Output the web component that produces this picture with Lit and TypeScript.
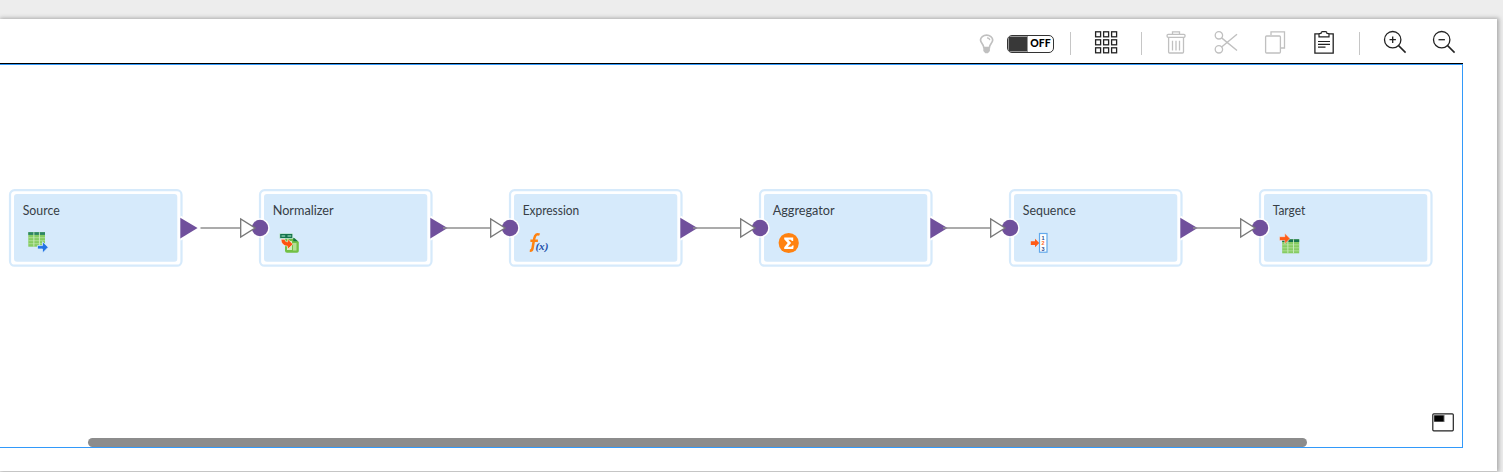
import { LitElement, html, css, svg } from "lit";
import { customElement } from "lit/decorators.js";
import { styleMap } from "lit/directives/style-map.js";

interface FlowNode { label: string; x: number; width: number; icon: unknown }

const sheet = (x: number, y: number, w: number, h: number, head: string) => svg`
  <rect x=${x} y=${y} width=${w} height=${h} fill="#86cc62"/>
  <rect x=${x} y=${y} width=${w} height="2.700" fill=${head}/>
  <path d="M${x} ${y + 5.5}h${w}M${x} ${y + 8.5}h${w}M${x} ${y + 11.5}h${w}" stroke="#b5e29d" stroke-width=".8"/>
  <path d="M${x + w / 3} ${y}v${h}M${x + (2 * w) / 3} ${y}v${h}" stroke="#cdebc3" stroke-width=".9"/>`;

/* Node icons use the coordinates of the 174 x 78 node frame. */
const sourceIcon = svg`
  ${sheet(19.3, 43.2, 16.7, 14.5, "#2c8465")}
  <path d="M28.500 56.600h5v-3.900l5.700 5.600-5.700 5.700v-4h-5z" fill="#2273e3" stroke="#d6eafb" stroke-width=".8"/>`;
const normalizerIcon = svg`
  <path d="M26 49h9.500l4.300 4v9q0 1.800-1.800 1.800h-10q-2 0-2-2z" fill="#72c044"/>
  <path d="M29.500 52h3.500v9h-5v-3h1.500z" fill="#d2edbd"/><path d="M34 54h3.500v7.500h-3.500z" fill="#b4df95"/>
  <path d="M34.300 48.500v3.800h4.500z" fill="#14734c"/>
  <rect x="20.800" y="44.600" width="13" height="4.800" fill="#14734c" stroke="#d5f2e2" stroke-width=".7"/>
  <path d="M22.500 47h3.700M28.500 47h3.700" stroke="#80c7a5" stroke-width="1.300"/>
  <path d="M22 50.300h4q-.2 2.600 2.600 2.700v-3l5.400 5.200-5.400 5.100v-3.100q-6.400-.4-6.600-6.900z" fill="#ff5210" stroke="#fff" stroke-width=".5"/>`;
const expressionIcon = svg`
  <path d="M30.600 45.700q-2.900-1.300-4.400 1.100-.9 1.800-1.600 6.200l-1 6q-.5 3-2.800 2.800M21.400 51.700h7.500" fill="none" stroke="#ff8210" stroke-width="2.500"/>
  <text class="fx" x="26.400" y="60.800" textLength="13" lengthAdjust="spacingAndGlyphs">(x)</text>`;
const aggregatorIcon = svg`
  <circle cx="29.700" cy="54" r="10.100" fill="#ff8210"/>
  <path d="M25.200 48.400h9v3.500h-1.400l-.8-1.100h-2.700l2.800 3.200-3.300 3.700h3.500l1-1.300h1.400l-.5 3.500h-9v-1.700l3.500-4.100-3.500-3.900z" fill="#fff"/>`;
const sequenceIcon = svg`
  <path d="M21.800 52.200h4.200v-2.400l4.300 4.200-4.300 4.300v-2.400h-4.200z" fill="#ff5b17"/>
  <rect x="30.500" y="44.500" width="7.500" height="18.700" fill="#fff" stroke="#62a9ec" stroke-width="1.200"/>
  <text class="digit" x="32.600" y="50.500">1</text>
  <text class="digit two" x="32.600" y="56.300">2</text>
  <text class="digit" x="32.600" y="62.200">3</text>`;
const targetIcon = svg`
  ${sheet(23.2, 50.3, 17, 14, "#17744e")}
  <path d="M20.500 47.700h5.300v-3.500l5.200 5.400-5.200 5.300v-3.400h-5.300z" fill="#ff5c18" stroke="#e8f1f7" stroke-width=".5"/>`;

const nodes: FlowNode[] = [
  { label: "Source", x: 9, width: 37, icon: sourceIcon },
  { label: "Normalizer", x: 259, width: 61, icon: normalizerIcon },
  { label: "Expression", x: 509, width: 56.5, icon: expressionIcon },
  { label: "Aggregator", x: 759, width: 62, icon: aggregatorIcon },
  { label: "Sequence", x: 1009, width: 53, icon: sequenceIcon },
  { label: "Target", x: 1259, width: 32.5, icon: targetIcon },
];

@customElement("flow-node")
class FlowNodeElement extends LitElement {
  static properties = { node: { attribute: false } };
  declare node: FlowNode;
  static styles = css`
    :host { display: block; }
    svg { display: block; overflow: visible; }
    .label { font: 12.5px "Lato", sans-serif; fill: #363e46; }
    .fx { font: italic bold 10.5px "Liberation Serif", serif; fill: #1c4fa8; }
    .digit { font: bold 5.5px "Liberation Sans", sans-serif; fill: #284b91; }
    .two { fill: #ff6a2a; }
  `;
  render() {
    const n = this.node;
    return html`<svg width="174" height="78" viewBox="0 0 174 78">
      <rect x="1" y="1.200" width="171.500" height="75.500" rx="4.500" fill="#fff" stroke="#d6eafb" stroke-width="2.200"/>
      <rect x="5" y="5" width="163.300" height="67.700" rx="3" fill="#d6eafb"/>
      <text class="label" x="13.700" y="25.500" textLength=${n.width} lengthAdjust="spacingAndGlyphs">${n.label}</text>
      ${n.icon}
    </svg>`;
  }
}

@customElement("app-root")
class AppRoot extends LitElement {
  static styles = css`
    :host { display: block; height: 472px; overflow: hidden; background: #ededed; font-family: "Lato", sans-serif; }
    .page { box-sizing: border-box; height: 472px; padding: 19px 6px 1px 0; }
    .panel { box-sizing: border-box; height: 452px; padding-right: 34px; background: #fff; box-shadow: 1px 0 4px 1px #aaa; }
    .toolbar { box-sizing: border-box; height: 45px; display: flex; justify-content: flex-end; align-items: flex-start; padding: 11px 7px 0 0; border-bottom: 1px solid #000; }
    .toolbar svg { display: block; width: 24px; height: 24px; flex: none; fill: none; stroke: #222; stroke-width: 1.3; }
    .toolbar .muted { stroke: #c0c0c0; }
    .sep { width: 1px; height: 23px; margin: 2px 23px 0; background: #c6c6c6; }
    .sep.first { margin-left: 16px; }
    .sep.second { margin-right: 22px; }
    .toggle { box-sizing: border-box; width: 47px; height: 18px; margin: 5px 0 0 8px; border: 1px solid #333; border-radius: 5px; display: flex; overflow: hidden; background: #fff; }
    .knob { width: 20px; background: #383838; box-shadow: inset 0 0 0 1px #999; }
    .off { flex: 1; text-align: center; font: 900 10.5px/15px "Lato", sans-serif; color: #000; }
    .g25 { margin-left: 25px; }
    .g26 { margin-left: 26px; }
    .canvas { box-sizing: border-box; position: relative; height: 384px; border: 1px solid #3299fa; border-left: 0; overflow: hidden; background: #fff; }
    .wires { position: absolute; left: 0; top: 0; display: block; }
    .node { position: absolute; top: 124px; }
    .map { position: absolute; left: 1432px; top: 348px; }
    .scroll { position: absolute; left: 88px; top: 373px; width: 1219px; height: 9px; border-radius: 4.5px; background: #8c8c8c; }
  `;

  toolbar() {
    const lens = svg`<circle cx="9.700" cy="9.700" r="8.200"/><path d="m15.600 15.600 7 7" stroke-width="1.500"/>`;
    return html`<div class="toolbar">
      <svg class="muted" viewBox="0 0 24 24"><path d="M8.800 17.500c0-3.500-3.300-4.500-3.300-7.400a6.100 5 0 0 1 12.200 0c0 2.900-3.300 3.900-3.300 7.400z" stroke-width="1.700"/><path d="M12 7.800q2.500.2 2.800 2.300"/><path d="M8.300 17h6.600v4l-2 2.200h-2.600l-2-2.200z" fill="#c0c0c0" stroke="none"/></svg>
      <div class="toggle"><div class="knob"></div><div class="off">OFF</div></div>
      <div class="sep first"></div>
      <svg viewBox="0 0 24 24">${[0, 1, 2].map((r) => [0, 1, 2].map((c) => svg`<rect x=${1.6 + c * 8} y=${1.8 + r * 8} width="5" height="5"/>`))}</svg>
      <div class="sep second"></div>
      <svg class="muted" viewBox="0 0 24 24"><rect x="3.100" y="4.300" width="17.900" height="3" rx="1"/><path d="M8.500 4.300V1.900h7v2.400M4.600 7.300V22q0 1 1 1h12.900q1 0 1-1V7.300M8.500 10.800v9.700M12 10.800v9.700M15.500 10.800v9.700"/></svg>
      <svg class="muted g26" viewBox="0 0 24 24"><circle cx="4.900" cy="5.300" r="3.700"/><circle cx="4.900" cy="19.300" r="3.700"/><path d="M7.600 7.900 23 20.500M7.600 17 23 4.300" stroke-width="1.400"/></svg>
      <svg class="muted g25" viewBox="0 0 24 24"><path d="M8 5V1.800h13.500V18H18"/><rect x="2.600" y="6" width="14.800" height="17" rx="1"/></svg>
      <svg class="g25" viewBox="0 0 24 24"><path d="M7 3.800H2.900v19.300h18.300V3.800H17"/><path d="M7 6.900V4.200q0-.8 2-.8 0-1.700 1.600-1.700h2.800q1.600 0 1.600 1.700 2 0 2 .8v2.700zM6 11.500h12M6 14.300h12M6 17.100h7.500" stroke-width="1.200"/></svg>
      <div class="sep"></div>
      <svg viewBox="0 0 24 24">${lens}<path d="M6.500 9.700h6.400M9.700 6.500v6.400"/></svg>
      <svg class="g25" viewBox="0 0 24 24">${lens}<path d="M6.500 9.700h6.400"/></svg>
    </div>`;
  }

  render() {
    return html`<div class="page"><div class="panel">
      ${this.toolbar()}
      <div class="canvas">
        ${nodes.map((n) => html`<flow-node class="node" style=${styleMap({ left: `${n.x}px` })} .node=${n}></flow-node>`)}
        <svg class="wires" width="1462" height="382">
          ${nodes.slice(0, -1).map(({ x }, i) => svg`
            <path d="M${x + 171.5} 150.500v25.200l3.500-2v-21.200z" fill="#fff"/>
            <path d="M${x + 171.3} 152.800v20.600l17.300-10.300z" fill="#70509c"/>
            <circle cx=${x + 251} cy="163" r="9.700" fill="#fff"/>
            <circle cx=${x + 251} cy="163" r="8.200" fill="#70509c"/>
            <path d="M${x + (i ? 184 : 191.5)} 163h${i ? 47 : 39.5}" stroke="#8f8f8f" stroke-width="1.700"/>
            <path d="M${x + 231.700} 154v18l14.300-9z" fill="#fff" stroke="#777" stroke-width="1.300"/>`)}
        </svg>
        <svg class="map" width="22" height="19"><rect x=".8" y=".8" width="20.500" height="17" rx="1" fill="#fff" stroke="#222" stroke-width="1.200"/><rect x="2" y="2" width="10.700" height="7" fill="#999"/><rect x="2.300" y="2.500" width="9.400" height="6" fill="#000"/></svg>
        <div class="scroll"></div>
      </div>
    </div></div>`;
  }
}
